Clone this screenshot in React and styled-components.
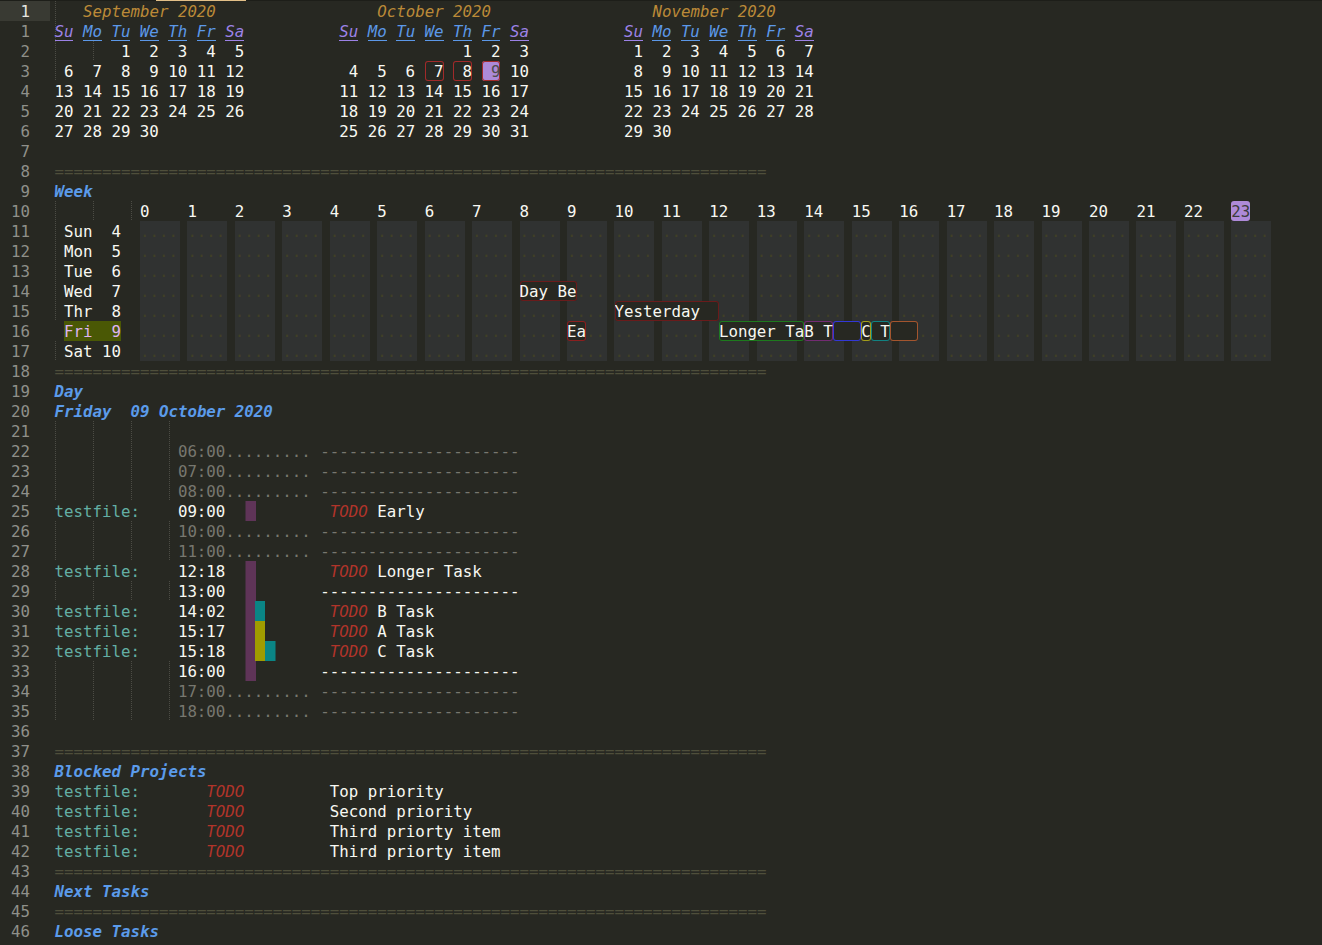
import styled, { createGlobalStyle } from "styled-components";

const ROW = 20;

const GlobalStyle = createGlobalStyle`
  html, body {
    margin: 0;
    background: #272822;
  }
  body {
    font-family: "DejaVu Sans Mono", "Liberation Mono", monospace;
    font-size: 15.78px;
    line-height: 22px;
    color: #f8f8f2;
  }
`;

// indent guides: [x, firstRow, endRow)
const GUIDES = [
  [0, 0, 4],
  [38, 2, 3],
  [0, 10, 16],
  [0, 17, 18],
  [38, 10, 11],
  [76, 10, 11],
  ...[0, 38, 76, 114].flatMap((x) => [
    [x, 21, 25],
    [x, 26, 28],
    [x, 29, 30],
    [x, 33, 36],
  ]),
];

const LINE_NUMBERS = [1, ...Array.from({ length: 46 }, (_, i) => i + 1)];

const MONTHS = [
  { name: "September", year: 2020, month: 8 },
  { name: "October", year: 2020, month: 9, marks: { 7: "past", 8: "past", 9: "today" } },
  { name: "November", year: 2020, month: 10 },
];

const DAY_NAMES = ["Su", "Mo", "Tu", "We", "Th", "Fr", "Sa"];

const WEEK_DAYS = [
  ["Sun", 4],
  ["Mon", 5],
  ["Tue", 6],
  ["Wed", 7],
  ["Thr", 8],
  ["Fri", 9, true],
  ["Sat", 10],
];

const WEEK_EVENTS = [
  { col: 49, day: 3, len: 6, label: "Day Be", color: "#6a1b1b" },
  { col: 59, day: 4, len: 11, label: "Yesterday", color: "#6a1b1b" },
  { col: 54, day: 5, len: 2, label: "Ea", color: "#8a1f1f" },
  { col: 70, day: 5, len: 9, label: "Longer Ta", color: "#1d7a1d" },
  { col: 79, day: 5, len: 3, label: "B T", color: "#732b73" },
  { col: 82, day: 5, len: 3, label: "", color: "#3338d6" },
  { col: 85, day: 5, len: 1, label: "C", color: "#a39d1c" },
  { col: 86, day: 5, len: 2, label: " T", color: "#118282" },
  { col: 88, day: 5, len: 3, label: "", color: "#a3552e" },
];

const DAY_ROWS = [
  {},
  { time: "06:00", idle: true },
  { time: "07:00", idle: true },
  { time: "08:00", idle: true },
  { file: true, time: "09:00", task: "Early" },
  { time: "10:00", idle: true },
  { time: "11:00", idle: true },
  { file: true, time: "12:18", task: "Longer Task" },
  { time: "13:00" },
  { file: true, time: "14:02", task: "B Task" },
  { file: true, time: "15:17", task: "A Task" },
  { file: true, time: "15:18", task: "C Task" },
  { time: "16:00" },
  { time: "17:00", idle: true },
  { time: "18:00", idle: true },
];

const DAY_BARS = [
  { x: 190.5, y: 80, w: 10.5, h: 20, fill: "#5f3458" },
  { x: 190.5, y: 140, w: 10.5, h: 120, fill: "#5f3458" },
  { x: 200, y: 180, w: 10, h: 20, fill: "#0a8585" },
  { x: 200, y: 200, w: 10, h: 40, fill: "#a09c00" },
  { x: 210, y: 220, w: 10.5, h: 20, fill: "#0a8585" },
];

const BLOCKED = ["Top priority", "Second priority", "Third priorty item", "Third priorty item"];

function monthWeeks(year, month) {
  const first = new Date(year, month, 1).getDay();
  const days = new Date(year, month + 1, 0).getDate();
  const cells = [...Array(first).fill(null), ...Array.from({ length: days }, (_, i) => i + 1)];
  while (cells.length % 7) cells.push(null);
  return cells;
}

function Month({ name, year, month, marks = {} }) {
  const title = `${name} ${year}`;
  return (
    <MonthGrid>
      <MonthTitle $indent={Math.floor((20 - title.length) / 2)}>{title}</MonthTitle>
      {DAY_NAMES.map((d, i) => (
        <DayName key={d} $weekend={i === 0 || i === 6}>
          {d}
        </DayName>
      ))}
      {monthWeeks(year, month).map((n, i) => (
        <DateCell key={i} $mark={n && marks[n]}>
          {n}
        </DateCell>
      ))}
    </MonthGrid>
  );
}

function Week() {
  return (
    <WeekGrid>
      {Array.from({ length: 24 }, (_, h) => (
        <HourLabel key={h} $col={h + 2}>
          {h === 23 ? <Now>{h}</Now> : h}
        </HourLabel>
      ))}
      {WEEK_DAYS.map(([name, n, today], i) => (
        <DayLabel key={name} $row={i + 2}>
          <DayLabelText $today={today}>{`${name} ${String(n).padStart(2, " ")}`}</DayLabelText>
        </DayLabel>
      ))}
      {Array.from({ length: 24 }, (_, h) => (
        <HourBlock key={h} $col={h + 2}>
          {WEEK_DAYS.map(([name]) => (
            <Dots key={name}>....</Dots>
          ))}
        </HourBlock>
      ))}
      {WEEK_EVENTS.map((e, i) => (
        <Event
          key={i}
          $color={e.color}
          style={{ left: `${e.col}ch`, top: (e.day + 1) * ROW, width: `${e.len}ch` }}
        >
          {e.label}
        </Event>
      ))}
    </WeekGrid>
  );
}

function DaySchedule() {
  return (
    <DaySection>
      {DAY_ROWS.map((r, i) => (
        <DayRow key={i}>
          <FileName>{r.file ? "testfile:" : ""}</FileName>
          <Time $idle={r.idle}>{r.time ? r.time + (r.idle ? "........." : "") : ""}</Time>
          {r.task ? (
            <Task>
              <Todo>TODO</Todo> {r.task}
            </Task>
          ) : r.time ? (
            <Dashes $idle={r.idle}>{"-".repeat(21)}</Dashes>
          ) : null}
        </DayRow>
      ))}
      <Bars width="240" height="300" viewBox="0 0 240 300">
        {DAY_BARS.map((b, i) => (
          <rect key={i} x={b.x} y={b.y} width={b.w} height={b.h} fill={b.fill} />
        ))}
      </Bars>
    </DaySection>
  );
}

export default function App() {
  const rule = "=".repeat(75);
  return (
    <>
      <GlobalStyle />
      <Editor>
        <TabMarker />
        <Gutter>
          {LINE_NUMBERS.map((n, i) => (
            <LineNumber key={i} $current={i === 0}>
              {n}
            </LineNumber>
          ))}
        </Gutter>
        <Content $guides={GUIDES}>
          <Calendars>
            {MONTHS.map((m) => (
              <Month key={m.name} {...m} />
            ))}
          </Calendars>
          <Line />
          <Rule>{rule}</Rule>
          <Heading>Week</Heading>
          <Week />
          <Rule>{rule}</Rule>
          <Heading>Day</Heading>
          <Heading>Friday  09 October 2020</Heading>
          <DaySchedule />
          <Line />
          <Rule>{rule}</Rule>
          <Heading>Blocked Projects</Heading>
          {BLOCKED.map((t, i) => (
            <ProjectRow key={i}>
              <FileName>testfile:</FileName>
              <Todo>TODO</Todo>
              <span>{t}</span>
            </ProjectRow>
          ))}
          <Rule>{rule}</Rule>
          <Heading>Next Tasks</Heading>
          <Rule>{rule}</Rule>
          <Heading>Loose Tasks</Heading>
        </Content>
      </Editor>
    </>
  );
}

const Editor = styled.div`
  position: relative;
  display: flex;
  border-top: 1px solid #1d1e19;
  min-height: 944px;
  white-space: pre;
`;

const TabMarker = styled.div`
  position: absolute;
  top: -1px;
  left: 156px;
  width: 90px;
  height: 1px;
  background: #e3c088;
`;

const Gutter = styled.div`
  flex: 0 0 54.5px;
  display: flex;
  flex-direction: column;
`;

const LineNumber = styled.div`
  width: 50px;
  height: ${ROW}px;
  box-sizing: border-box;
  padding-right: 20px;
  text-align: right;
  color: ${(p) => (p.$current ? "#e6e6e0" : "#8f908a")};
  background: ${(p) => (p.$current ? "#393a33" : "transparent")};
`;

const Content = styled.div`
  flex: 1;
  display: flex;
  flex-direction: column;
  background-image: ${(p) =>
    p.$guides
      .map(() => "repeating-linear-gradient(to bottom, #4c4c45 0 1px, transparent 1px 2px)")
      .join(", ")};
  background-size: ${(p) => p.$guides.map(([, a, b]) => `1px ${(b - a) * ROW}px`).join(", ")};
  background-position: ${(p) => p.$guides.map(([x, a]) => `${x}px ${a * ROW}px`).join(", ")};
  background-repeat: no-repeat;
`;

const Line = styled.div`
  height: ${ROW}px;
`;

const Rule = styled(Line)`
  color: #4f4f3b;
`;

const Heading = styled(Line)`
  color: #5b9bea;
  font-style: italic;
  font-weight: 700;
`;

const Calendars = styled.div`
  display: flex;
  gap: 10ch;
`;

const MonthGrid = styled.div`
  width: 20ch;
  display: grid;
  grid-template-columns: repeat(7, 2ch);
  column-gap: 1ch;
  grid-auto-rows: ${ROW}px;
`;

const MonthTitle = styled.div`
  grid-column: 1 / -1;
  padding-left: ${(p) => p.$indent}ch;
  color: #bb8a38;
  font-style: italic;
`;

const DayName = styled.div`
  font-style: italic;
  color: ${(p) => (p.$weekend ? "#9c82e6" : "#5c98e8")};
  box-shadow: inset 0 -1px 0 ${(p) => (p.$weekend ? "#9c82e6" : "#5c98e8")};
`;

const DateCell = styled.div`
  text-align: right;
  border-radius: 3px;
  color: ${(p) => (p.$mark === "today" ? "#4e4e4e" : "#f8f8f2")};
  background: ${(p) => (p.$mark === "today" ? "#ad8ad8" : "transparent")};
  box-shadow: ${(p) => (p.$mark ? "inset 0 0 0 1px #a12a2a" : "none")};
`;

const WeekGrid = styled.div`
  position: relative;
  display: grid;
  grid-template-columns: 9ch repeat(24, 5ch);
  grid-template-rows: repeat(8, ${ROW}px);
`;

const HourLabel = styled.div`
  grid-row: 1;
  grid-column: ${(p) => p.$col};
`;

const Now = styled.span`
  display: inline-block;
  height: ${ROW}px;
  vertical-align: top;
  background: #ae8ad8;
  color: #3c3c3c;
  border-radius: 3px;
`;

const DayLabel = styled.div`
  grid-column: 1;
  grid-row: ${(p) => p.$row};
  padding-left: 1ch;
`;

const DayLabelText = styled.span`
  display: inline-block;
  height: ${ROW}px;
  vertical-align: top;
  color: ${(p) => (p.$today ? "#dfb4f2" : "#f8f8f2")};
  background: ${(p) => (p.$today ? "#4a5805" : "transparent")};
`;

const HourBlock = styled.div`
  grid-column: ${(p) => p.$col};
  grid-row: 2 / span 7;
  width: 40px;
  background: #303231;
  display: flex;
  flex-direction: column;
`;

const Dots = styled.div`
  height: ${ROW}px;
  color: #404027;
`;

const Event = styled.div`
  position: absolute;
  height: ${ROW}px;
  box-sizing: border-box;
  overflow: hidden;
  background: #272822;
  border-radius: 3px;
  box-shadow: inset 0 0 0 1px ${(p) => p.$color};
`;

const DaySection = styled.div`
  position: relative;
  display: flex;
  flex-direction: column;
`;

const DayRow = styled.div`
  display: grid;
  grid-template-columns: 13ch 15ch 1fr;
  height: ${ROW}px;
`;

const FileName = styled.span`
  color: #63afa5;
`;

const Time = styled.span`
  color: ${(p) => (p.$idle ? "#77776f" : "#f8f8f2")};
`;

const Dashes = styled.span`
  color: ${(p) => (p.$idle ? "#77776f" : "#f8f8f2")};
`;

const Task = styled.span`
  padding-left: 1ch;
`;

const Todo = styled.span`
  color: #b1342a;
  font-style: italic;
`;

const Bars = styled.svg`
  position: absolute;
  top: 0;
  left: 0;
  pointer-events: none;
`;

const ProjectRow = styled.div`
  display: grid;
  grid-template-columns: 16ch 13ch 1fr;
  height: ${ROW}px;
`;
